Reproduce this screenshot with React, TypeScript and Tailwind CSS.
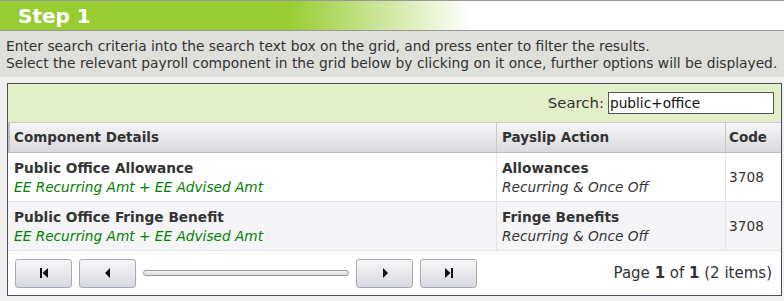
import React from "react";

const font = { fontFamily: '"DejaVu Sans", Verdana, sans-serif' };

function First() {
  return (
    <svg width="12" height="12" viewBox="0 0 12 12">
      <rect x="2" y="1" width="2" height="10" fill="#111" />
      <path d="M10 1 L4.5 6 L10 11 Z" fill="#111" />
    </svg>
  );
}
function Prev() {
  return (
    <svg width="12" height="12" viewBox="0 0 12 12">
      <path d="M8 1 L3 6 L8 11 Z" fill="#111" />
    </svg>
  );
}
function Next() {
  return (
    <svg width="12" height="12" viewBox="0 0 12 12">
      <path d="M4 1 L9 6 L4 11 Z" fill="#111" />
    </svg>
  );
}
function Last() {
  return (
    <svg width="12" height="12" viewBox="0 0 12 12">
      <path d="M2 1 L7.5 6 L2 11 Z" fill="#111" />
      <rect x="8" y="1" width="2" height="10" fill="#111" />
    </svg>
  );
}

function Btn({ children }: { children: React.ReactNode }) {
  return (
    <div className="w-[57px] h-[29px] flex items-center justify-center rounded-[3px] border border-[#a8a8b8] bg-gradient-to-b from-[#f7f7fa] to-[#d8d8e0]">
      {children}
    </div>
  );
}

const rows = [
  { name: "Public Office Allowance", action: "Allowances", bg: "bg-white" },
  { name: "Public Office Fringe Benefit", action: "Fringe Benefits", bg: "bg-[#f5f5f7]" },
];

export default function App() {
  return (
    <div className="w-[784px] h-[301px] bg-white overflow-hidden text-[#333]" style={font}>
      <div className="h-[31px] border-t border-b border-[#999] bg-[linear-gradient(to_right,#99cc33_0px,#99cc33_290px,#ffffff_470px)] flex items-center pl-[18px]">
        <span className="text-white font-bold text-[20px] leading-none">Step 1</span>
      </div>
      <div className="h-[46px] bg-[#dfdfdb] px-[6px] pt-[7px] text-[13.8px] leading-[17px] text-[#333] whitespace-nowrap">
        <div>Enter search criteria into the search text box on the grid, and press enter to filter the results.</div>
        <div>Select the relevant payroll component in the grid below by clicking on it once, further options will be displayed.</div>
      </div>
      <div className="bg-[#f0f0f0] pl-[7px] pr-[2px] pt-[6px] h-[224px]">
        <div className="border border-[#4c4c60] bg-white">
          <div className="h-[38px] bg-[#e2efc9] flex items-center justify-end pr-[7px] gap-[4px]">
            <span className="text-[14.9px]">Search:</span>
            <div className="w-[166px] h-[22px] border border-[#555] bg-white flex items-center px-[1px] text-[13.7px] text-[#111]">public+office</div>
          </div>
          <div className="flex h-[31px] bg-gradient-to-b from-[#f6f6f8] to-[#dadade] border-t border-[#ccc] border-b border-b-[#bbb] font-bold text-[13.5px]">
            <div className="w-[488px] border-l-[2px] border-[#c0c0c0] pl-[4px] flex items-center">Component Details</div>
            <div className="w-[229px] border-l border-[#c8c8cc] pl-[5px] flex items-center">Payslip Action</div>
            <div className="flex-1 border-l border-[#c8c8cc] pl-[3px] flex items-center">Code</div>
          </div>
          {rows.map((r, i) => (
            <div key={i} className={`flex h-[49px] ${r.bg} border-b border-[#e4e4e8] text-[13.7px]`}>
              <div className="w-[488px] pl-[6px] pt-[6px] leading-[19px]">
                <div className="font-bold">{r.name}</div>
                <div className="italic text-[#008000]">EE Recurring Amt + EE Advised Amt</div>
              </div>
              <div className="w-[229px] border-l border-[#e4e4e8] pl-[5px] pt-[6px] leading-[19px]">
                <div className="font-bold">{r.action}</div>
                <div className="italic">Recurring &amp; Once Off</div>
              </div>
              <div className="flex-1 border-l border-[#e4e4e8] pl-[3px] flex items-center">3708</div>
            </div>
          ))}
          <div className="h-[44px] flex items-center pl-[7px] pr-[9px]">
            <Btn><First /></Btn>
            <div className="w-[7px]" />
            <Btn><Prev /></Btn>
            <div className="mx-[7px] w-[206px] h-[6px] rounded-full border border-[#999] bg-gradient-to-b from-[#f4f4f4] to-[#ddd]" />
            <Btn><Next /></Btn>
            <div className="w-[7px]" />
            <Btn><Last /></Btn>
            <div className="flex-1 text-right text-[15px] whitespace-nowrap">
              Page <b>1</b> of <b>1</b> (2 items)
            </div>
          </div>
        </div>
      </div>
    </div>
  );
}
